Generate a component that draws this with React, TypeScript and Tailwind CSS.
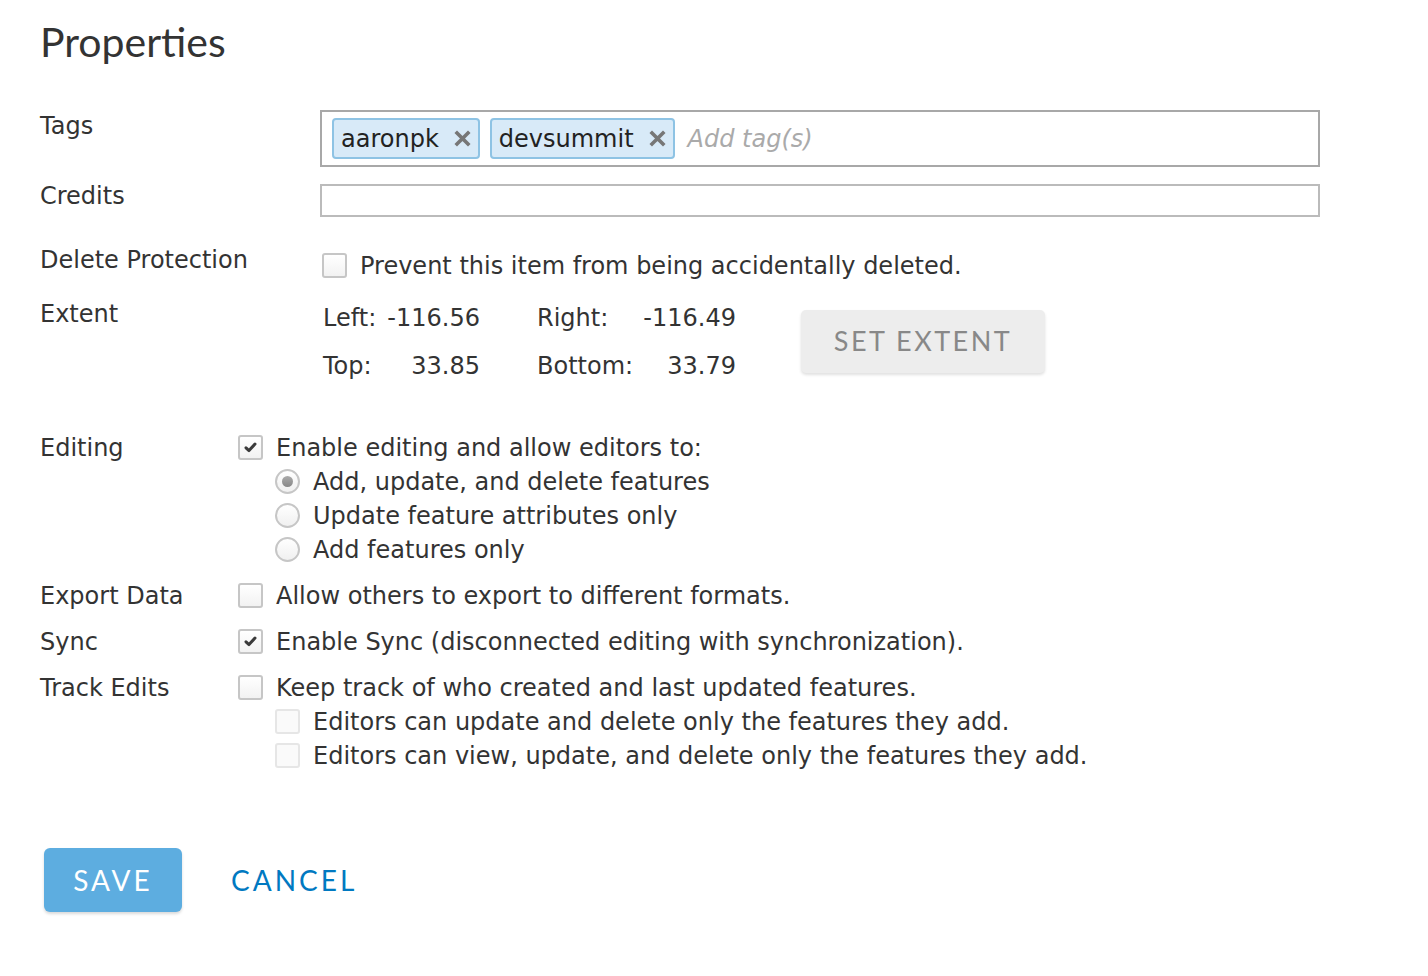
import React from "react";

const V = { fontFamily: '"DejaVu Sans", Verdana, sans-serif' };
const A = { fontFamily: 'Lato, "Open Sans", sans-serif' };

function Box({ checked = false, faint = false }: { checked?: boolean; faint?: boolean }) {
  return (
    <span
      className={`inline-flex items-center justify-center w-[25px] h-[25px] rounded-[3px] border-2 shrink-0 ${
        faint ? "border-[#e6e6e6] bg-[#fafafa]" : "border-[#c6c6c6] bg-gradient-to-b from-[#ffffff] to-[#f2f2f2]"
      }`}
    >
      {checked && (
        <svg width="13" height="11" viewBox="0 0 13 11">
          <path d="M2 5.8 L5 8.6 L11 2" stroke="#3a3a3a" strokeWidth="3" fill="none" strokeLinecap="round" strokeLinejoin="round" />
        </svg>
      )}
    </span>
  );
}

function Radio({ on = false }: { on?: boolean }) {
  return (
    <span className="inline-flex items-center justify-center w-[25px] h-[25px] rounded-full border-2 border-[#c6c6c6] bg-gradient-to-b from-[#ffffff] to-[#f0f0f0] shrink-0">
      {on && <span className="w-[11px] h-[11px] rounded-full bg-gradient-to-b from-[#aaa] to-[#888]" />}
    </span>
  );
}

function Tag({ text }: { text: string }) {
  return (
    <span className="inline-flex items-center h-[41px] pl-[7px] pr-[7px] rounded-[4px] border-2 border-[#8ec3e4] bg-[#d8eaf8] text-[#222] text-[24px] gap-[15px]">
      {text}
      <svg width="17" height="17" viewBox="0 0 17 17">
        <path d="M3 3 L14 14 M14 3 L3 14" stroke="#777" strokeWidth="3.6" strokeLinecap="square" />
      </svg>
    </span>
  );
}

function Row({ label, labelW, children, className = "" }: { label: string; labelW: string; children: React.ReactNode; className?: string }) {
  return (
    <div className={`flex ${className}`}>
      <div className={`${labelW} shrink-0 h-[34px] leading-[34px] pt-[1px]`}>{label}</div>
      <div className="flex flex-col">{children}</div>
    </div>
  );
}

function Line({ children, indent = false }: { children: React.ReactNode; indent?: boolean }) {
  return <div className={`flex items-center gap-[13px] h-[34px] ${indent ? "pl-[37px]" : ""}`}>{children}</div>;
}

export default function App() {
  return (
    <div className="bg-white w-[1428px] h-[976px] text-[#333] text-[24px] pl-[40px] pt-[20px]" style={V}>
      <h1 className="text-[41px] text-[#333] leading-[41px] h-[41px] mb-[49px] pt-[1px]" style={A}>
        Properties
      </h1>

      {/* Tags */}
      <div className="flex">
        <div className="w-[280px] leading-[30px] pt-[1px]">Tags</div>
        <div className="w-[1000px] h-[57px] border-2 border-[#a8a8a8] flex items-center pl-[10px] gap-[10px]">
          <Tag text="aaronpk" />
          <Tag text="devsummit" />
          <span className="italic text-[#aaa] text-[24px] ml-[3px]">Add tag(s)</span>
        </div>
      </div>

      {/* Credits */}
      <div className="flex mt-[17px]">
        <div className="w-[280px] leading-[30px] -mt-[3px] h-[30px]">Credits</div>
        <div className="w-[1000px] h-[33px] border-2 border-[#bbb]" />
      </div>

      {/* Delete protection */}
      <div className="flex mt-[27px]">
        <div className="w-[282px] leading-[30px] pt-[1px]">Delete Protection</div>
        <div className="flex items-center gap-[13px] mt-[6px] h-[30px]">
          <Box />
          <span className="pt-[1px]">Prevent this item from being accidentally deleted.</span>
        </div>
      </div>

      {/* Extent */}
      <div className="flex mt-[18px]">
        <div className="w-[283px] leading-[30px] pt-[1px]">Extent</div>
        <div className="grid grid-cols-[157px_199px] gap-x-[57px] leading-[30px] gap-y-[18px] pt-[5px]">
          <div className="flex justify-between">
            <span>Left:</span>
            <span>-116.56</span>
          </div>
          <div className="flex justify-between">
            <span>Right:</span>
            <span>-116.49</span>
          </div>
          <div className="flex justify-between">
            <span>Top:</span>
            <span>33.85</span>
          </div>
          <div className="flex justify-between">
            <span>Bottom:</span>
            <span>33.79</span>
          </div>
        </div>
        <button
          className="ml-[65px] mt-[12px] w-[244px] h-[63px] rounded-[5px] bg-[#ededed] text-[#888] text-[27px] tracking-[2.5px] shadow-[0_2px_3px_rgba(0,0,0,0.12)]"
          style={A}
        >
          SET EXTENT
        </button>
      </div>

      {/* Editing */}
      <Row label="Editing" labelW="w-[198px]" className="mt-[49px]">
        <Line>
          <Box checked />
          <span className="pt-[1px]">Enable editing and allow editors to:</span>
        </Line>
        <Line indent>
          <Radio on />
          <span className="pt-[1px]">Add, update, and delete features</span>
        </Line>
        <Line indent>
          <Radio />
          <span className="pt-[1px]">Update feature attributes only</span>
        </Line>
        <Line indent>
          <Radio />
          <span className="pt-[1px]">Add features only</span>
        </Line>
      </Row>

      {/* Export */}
      <Row label="Export Data" labelW="w-[198px]" className="mt-[12px]">
        <Line>
          <Box />
          <span className="pt-[1px]">Allow others to export to different formats.</span>
        </Line>
      </Row>

      {/* Sync */}
      <Row label="Sync" labelW="w-[198px]" className="mt-[12px]">
        <Line>
          <Box checked />
          <span className="pt-[1px]">Enable Sync (disconnected editing with synchronization).</span>
        </Line>
      </Row>

      {/* Track edits */}
      <Row label="Track Edits" labelW="w-[198px]" className="mt-[12px]">
        <Line>
          <Box />
          <span className="pt-[1px]">Keep track of who created and last updated features.</span>
        </Line>
        <Line indent>
          <Box faint />
          <span className="pt-[1px]">Editors can update and delete only the features they add.</span>
        </Line>
        <Line indent>
          <Box faint />
          <span className="pt-[1px]">Editors can view, update, and delete only the features they add.</span>
        </Line>
      </Row>

      {/* Buttons */}
      <div className="flex items-center mt-[76px] gap-[49px] ml-[4px]" style={A}>
        <button className="w-[138px] h-[64px] rounded-[6px] bg-[#5dade0] text-white text-[28px] tracking-[3px] shadow-[0_2px_3px_rgba(0,0,0,0.15)]">
          SAVE
        </button>
        <button className="text-[#0079c1] text-[28px] tracking-[3px]">CANCEL</button>
      </div>
    </div>
  );
}
